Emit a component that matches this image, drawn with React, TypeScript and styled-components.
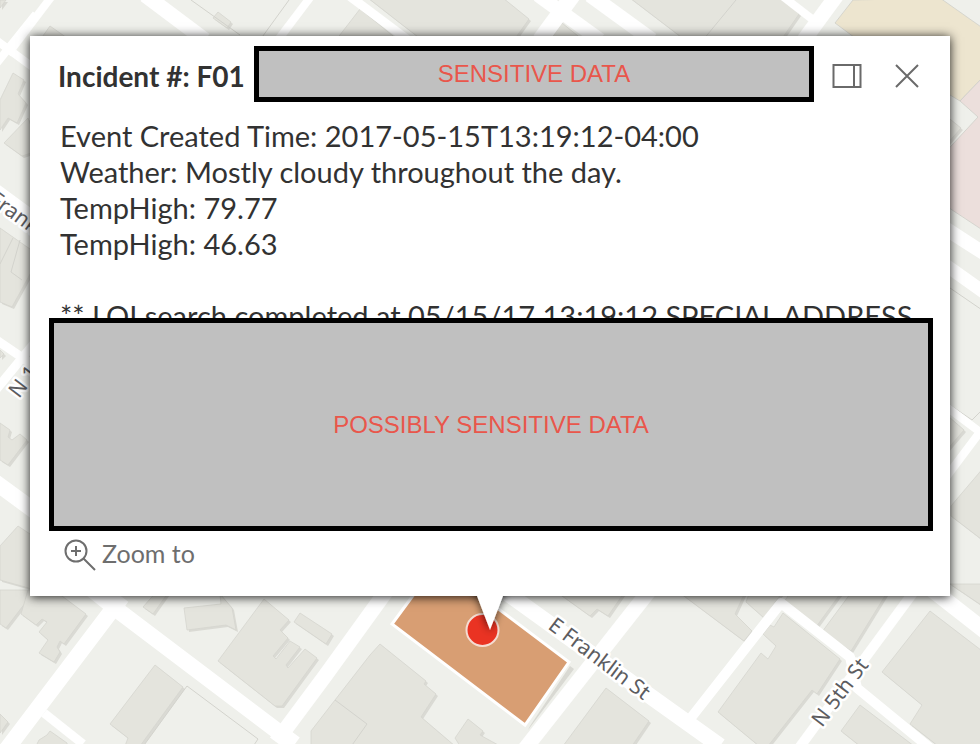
import React from "react";
import styled, { createGlobalStyle } from "styled-components";

const GlobalStyle = createGlobalStyle`
  *, *::before, *::after { box-sizing: border-box; }
  body {
    margin: 0;
    background: #eff0eb;
    color: #323232;
    font-family: Lato, "Liberation Sans", sans-serif;
  }
`;

const Page = styled.main`
  position: relative;
  min-height: 100vh;
  padding: 36px 30px 148px;
  overflow: hidden;
`;

const MapCanvas = styled.svg`
  position: absolute;
  inset: 0;
  width: 100%;
  height: 100%;
  display: block;
`;

const StreetLabel = styled.text`
  font-family: "Noto Sans", "Open Sans", sans-serif;
  font-size: 21px;
  fill: #5c5c60;
  stroke: #ffffff;
  stroke-width: 5px;
  stroke-linejoin: round;
  paint-order: stroke;
`;

const Popup = styled.section`
  position: relative;
  background: #ffffff;
  box-shadow: 0 1px 10px rgba(0, 0, 0, 0.9);
`;

const Header = styled.header`
  display: flex;
  align-items: center;
  padding: 10px 23px 0 28px;
`;

const Title = styled.h1`
  flex: 0 0 196px;
  margin: 0;
  padding-top: 4px;
  font-size: 28px;
  line-height: 36px;
  font-weight: 700;
  white-space: nowrap;
`;

const Redaction = styled.div`
  display: flex;
  align-items: center;
  justify-content: center;
  border: 5px solid #000000;
  background: #c0c0c0;
  color: #e9564b;
  font-family: "Liberation Sans", Arial, sans-serif;
  font-size: 24px;
  line-height: 28px;
`;

const TitleRedaction = styled(Redaction)`
  flex: 1;
  height: 56px;
`;

const BodyRedaction = styled(Redaction)`
  position: relative;
  height: 213px;
  margin: -16px 17px 0 19px;
`;

const HeaderActions = styled.div`
  display: flex;
  gap: 20px;
  margin-left: 13px;
  padding-top: 4px;
`;

const IconButton = styled.button`
  display: flex;
  align-items: center;
  justify-content: center;
  width: 40px;
  height: 40px;
  padding: 0;
  border: 0;
  background: transparent;
  color: #6a6a6a;
  cursor: pointer;
`;

const Details = styled.div`
  padding: 16px 30px 0;
  font-size: 29px;
  line-height: 36px;
`;

const Line = styled.p`
  min-height: 36px;
  margin: 0;
  white-space: nowrap;
`;

const Footer = styled.footer`
  padding: 4px 30px 21px;
`;

const ZoomButton = styled.button`
  display: flex;
  align-items: center;
  gap: 6px;
  height: 40px;
  padding: 0 4px;
  border: 0;
  background: transparent;
  color: #6e6e6e;
  font-family: inherit;
  font-size: 25px;
  line-height: 32px;
  cursor: pointer;
`;

const ZoomLabel = styled.span`
  padding-bottom: 4px;
`;

const Pointer = styled.svg`
  position: absolute;
  top: 100%;
  left: 50%;
  width: 60px;
  height: 50px;
  margin-left: -30px;
  overflow: hidden;
`;

type Road = [path: string, width: number];

const roads: Road[] = [
  ["M0 758 109 614 122 597", 16],
  ["M80 580 120 612 276 730 295 744", 16],
  ["M44 713 83 744", 9],
  ["M276 742 325 676 390 586", 15],
  ["M500 588 650 696 720 746", 16],
  ["M524 750 653 586", 15],
  ["M690 719 781 603 850 657 857 688 930 748", 10],
  ["M796 752 918 586", 10],
  ["M930 588 985 631", 16],
  ["M52 -4 8 54", 8],
  ["M-4 40 34 68", 8],
  ["M-4 64 36 14", 8],
  ["M145 -5 205 40", 15],
  ["M312 -5 278 40", 8],
  ["M348 -5 408 40", 9],
  ["M573 -5 540 40", 16],
  ["M538 -5 600 40", 14],
  ["M590 -5 652 40", 15],
  ["M781 -5 812 19", 8],
  ["M837 -5 804 40", 15],
  ["M940 225 985 254", 14],
  ["M940 261 985 293", 13],
  ["M940 402 980 432 944 480", 8],
  ["M-5 191 36 221", 15],
  ["M-5 339 36 367", 9],
  ["M-5 391 36 341", 9],
  ["M-5 482 36 512", 16],
];

const buildings: string[] = [
  "0,590 33,590 29,598 6,628 0,624",
  "28,590 54,590 86,614 64,644 60,641 57,647 60,652 54,662 39,653 48,640 39,632 47,622 42,619 36,625 21,614",
  "158,590 143,607 153,614 170,590",
  "184,608 221,604 220,594 232,608 236,630 226,625 187,630",
  "264,599 289,620 280,630 288,638 273,656 276,659 290,641 300,647 286,665 288,668 305,649 317,658 282,706 275,706 218,661",
  "300,613 332,634 326,644 294,622",
  "155,665 183,687 140,746 125,746 128,738 110,724",
  "0,714 8,722 0,733",
  "36,746 39,740 47,735 50,731 67,743 67,746",
  "380,644 426,681 424,684 436,694 421,717 455,746 311,746 311,731 335,700 370,655",
  "468,719 483,731 480,735 500,746 460,746 455,738",
  "540,580 590,616 597,609 608,616 630,584",
  "606,688 649,721 632,746 563,746",
  "668,584 744,641 752,631 735,614 746,590",
  "752,586 746,602 764,618 784,590",
  "783,613 774,627 770,625 763,634 776,646 768,659 761,653 718,712 759,746 768,746 812,690 817,694 840,659",
  "784,602 792,590 843,590 816,627",
  "822,632 856,586 891,586 851,651",
  "930,611 990,657 990,746 938,746 910,724 922,705 882,672",
  "860,705 914,746 860,746 841,731",
  "950,584 990,584 990,611",
  "13,73 24,80 18,94 26,103 17,123 8,118 0,130 0,100",
  "28,118 4,143 22,156 40,150",
  "0,228 40,256 12,307 0,302",
  "0,423 10,430 8,437 12,440 20,434 27,440 8,465 0,460",
  "0,546 18,526 36,538 36,590 0,580",
  "0,350 4,354 0,358",
  "0,0 6,0 0,8",
  "50,26 40,40 70,40",
  "218,12 231,22 227,28 213,18",
  "360,9 336,40 398,40",
  "368,-2 503,-2 529,19 514,40 422,40 400,23",
  "562,23 583,40 550,40",
  "630,-2 784,-2 799,14 781,40 685,40",
  "940,111 961,128 940,152",
  "940,409 964,430 940,458",
  "990,460 951,506 951,516 985,542 990,542",
];

const parcels: string[] = [
  "187,686 258,739 252,748",
  "187,686 142,748",
  "335,700 367,724 350,748",
  "191,0 240,35",
  "289,0 260,40",
  "736,0 703,40",
  "950,288 985,312",
  "950,405 972,420 982,410",
  "0,264 13,238",
  "20,240 11,272 22,280",
];

function BaseMap() {
  return (
    <MapCanvas viewBox="0 0 980 744" preserveAspectRatio="xMidYMid slice" role="img" aria-label="Street map">
      <rect width="980" height="744" fill="#eff0eb" />
      <g fill="#dadad4" transform="translate(2 2)">
        {buildings.map((points) => (
          <polygon key={points} points={points} />
        ))}
      </g>
      <g fill="#e4e4dd" stroke="#d6d6cf" strokeWidth="0.8">
        {buildings.map((points) => (
          <polygon key={points} points={points} />
        ))}
      </g>
      <g fill="none" stroke="#d3d3cd">
        {parcels.map((points) => (
          <polyline key={points} points={points} />
        ))}
      </g>
      <g stroke="#cfcfc9" strokeWidth="0.8">
        <polygon points="853,0 835,23 940,101 950,95 960,101 984,76 984,29 940,-2" fill="#ede5cf" />
        <polygon points="960,101 984,76 984,231 940,202 940,158 978,117" fill="#ecdfdc" />
      </g>
      <g fill="none" stroke="#ffffff" strokeLinejoin="round">
        {roads.map(([path, width]) => (
          <path key={path} d={path} strokeWidth={width} />
        ))}
      </g>
      <polygon points="530,726 570,666 574,669 528,730" fill="#d9d9d3" />
      <polygon points="420,586 392,624 525,725 569,662 468,586" fill="#d89e73" stroke="#ffffff" strokeWidth="3" />
      <StreetLabel transform="translate(547 628) rotate(37)">E Franklin St</StreetLabel>
      <StreetLabel transform="translate(822 728) rotate(-53)">N 5th St</StreetLabel>
      <StreetLabel transform="translate(-26 192) rotate(36)">E Franklin St</StreetLabel>
      <StreetLabel transform="translate(19 399) rotate(-53)">N 1st St</StreetLabel>
      <circle cx="482.5" cy="630" r="16" fill="#ea3323" stroke="#f5dcd2" strokeWidth="2" />
    </MapCanvas>
  );
}

function DockIcon() {
  return (
    <svg width="30" height="26" viewBox="0 0 30 26" fill="none" stroke="currentColor" strokeWidth="2" aria-hidden="true">
      <path d="M1.5 2H28.5V24H1.5ZM22 2V24" />
    </svg>
  );
}

function CloseIcon() {
  return (
    <svg width="26" height="26" viewBox="0 0 26 26" fill="none" stroke="currentColor" strokeWidth="2" aria-hidden="true">
      <path d="M2 2 24 24M24 2 2 24" />
    </svg>
  );
}

function ZoomIcon() {
  return (
    <svg width="32" height="32" viewBox="0 0 32 32" fill="none" stroke="currentColor" strokeWidth="2" aria-hidden="true">
      <circle cx="12" cy="12" r="10.5" />
      <path d="M19.5 19.5 31 31M12 7V17M7 12H17" />
    </svg>
  );
}

const details = [
  "Event Created Time: 2017-05-15T13:19:12-04:00",
  "Weather: Mostly cloudy throughout the day.",
  "TempHigh: 79.77",
  "TempHigh: 46.63",
  "",
  "** LOI search completed at 05/15/17 13:19:12 SPECIAL ADDRESS",
];

export default function App() {
  return (
    <Page>
      <GlobalStyle />
      <BaseMap />
      <Popup aria-labelledby="incident-title">
        <Header>
          <Title id="incident-title">Incident #: F01</Title>
          <TitleRedaction>SENSITIVE DATA</TitleRedaction>
          <HeaderActions>
            <IconButton type="button" aria-label="Dock">
              <DockIcon />
            </IconButton>
            <IconButton type="button" aria-label="Close">
              <CloseIcon />
            </IconButton>
          </HeaderActions>
        </Header>
        <Details>
          {details.map((line, index) => (
            <Line key={index}>{line}</Line>
          ))}
        </Details>
        <BodyRedaction>POSSIBLY SENSITIVE DATA</BodyRedaction>
        <Footer>
          <ZoomButton type="button">
            <ZoomIcon />
            <ZoomLabel>Zoom to</ZoomLabel>
          </ZoomButton>
        </Footer>
        <Pointer viewBox="0 0 60 50" aria-hidden="true">
          <defs>
            <filter id="pointer-shadow" x="-50%" y="-50%" width="200%" height="200%">
              <feDropShadow dx="0" dy="1" stdDeviation="4" floodColor="#000000" floodOpacity="0.7" />
            </filter>
          </defs>
          <polygon points="13,-10 47,-10 43,0 30,34 17,0" fill="#ffffff" filter="url(#pointer-shadow)" />
        </Pointer>
      </Popup>
    </Page>
  );
}
